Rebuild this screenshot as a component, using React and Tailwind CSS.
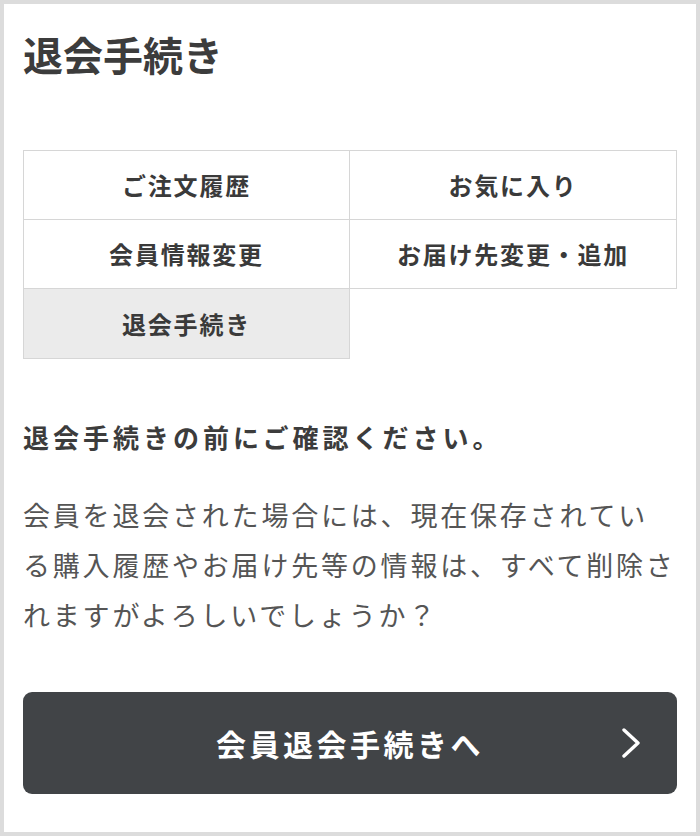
const menuItems = [
  { label: "ご注文履歴" },
  { label: "お気に入り" },
  { label: "会員情報変更" },
  { label: "お届け先変更・追加" },
  { label: "退会手続き", active: true },
];

function MenuCell({ item, index }) {
  const col = index % 2;
  const row = Math.floor(index / 2);
  return (
    <div
      className={[
        "flex items-center justify-center border-r border-b border-[#d6d6d6] text-[24px] font-bold tracking-[1.8px] text-[#3a3a3a]",
        col === 0 ? "border-l" : "",
        row === 0 ? "border-t h-[70px]" : "h-[69px]",
        row === 2 ? "h-[70px]" : "",
        item.active ? "bg-[#ebebeb]" : "bg-white",
      ].join(" ")}
    >
      {item.label}
    </div>
  );
}

export default function App() {
  return (
    <div
      className="w-[700px] h-[836px] border-4 border-[#dcdcdc] bg-white px-[19px] text-[#3c3c3c]"
      style={{ fontFamily: '"Noto Sans CJK JP", "Noto Sans", sans-serif' }}
    >
      <h1 className="pt-[20px] text-[40px] font-bold leading-[60px]">退会手続き</h1>

      <div className="mt-[66px] grid grid-cols-2">
        {menuItems.map((item, i) => (
          <MenuCell key={item.label} item={item} index={i} />
        ))}
      </div>

      <h2 className="mt-[58px] text-[26px] font-bold tracking-[4px] leading-[40px]">
        退会手続きの前にご確認ください。
      </h2>

      <p className="mt-[33px] text-[27px] tracking-[2.8px] leading-[50px] text-[#555]">
        会員を退会された場合には、現在保存されている購入履歴やお届け先等の情報は、すべて削除されますがよろしいでしょうか？
      </p>

      {/* 退会ボタン */}
      <button className="relative mt-[52px] flex h-[102px] w-full items-center justify-center rounded-[9px] bg-[#414447] text-[30px] font-bold tracking-[3.5px] text-white">
        会員退会手続きへ
        <svg
          className="absolute right-[36px] top-1/2 -translate-y-1/2"
          width="20"
          height="30"
          viewBox="0 0 20 30"
          fill="none"
          stroke="currentColor"
          strokeWidth="3.4"
          strokeLinecap="round"
          strokeLinejoin="round"
        >
          <polyline points="3,2 17,15 3,28" />
        </svg>
      </button>
    </div>
  );
}
